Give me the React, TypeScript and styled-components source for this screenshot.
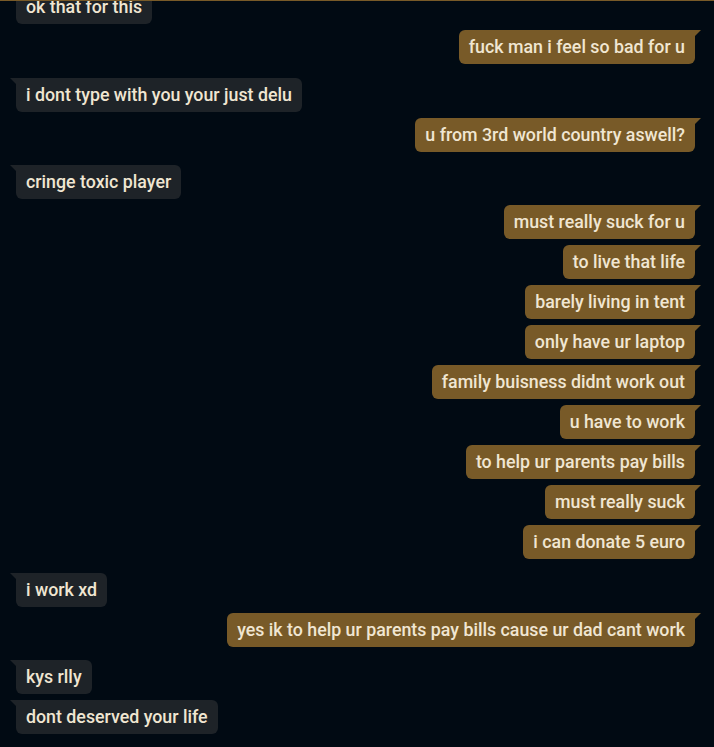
import React from 'react'
import styled, { createGlobalStyle } from 'styled-components'

const GlobalStyle = createGlobalStyle`
  html, body {
    margin: 0;
    padding: 0;
    background: #010a13;
  }
`

const Frame = styled.div`
  height: 747px;
  box-sizing: border-box;
  border-top: 1px solid #785a28;
  overflow: hidden;
  background: #010a13;
  font-family: Roboto, 'Noto Sans', sans-serif;
`

const List = styled.div`
  display: flex;
  flex-direction: column;
  margin-top: -11px;
  padding: 0 19px 0 16px;
`

const Row = styled.div<{ $mine: boolean; $spaced: boolean }>`
  display: flex;
  justify-content: ${(p) => (p.$mine ? 'flex-end' : 'flex-start')};
  margin-top: ${(p) => (p.$spaced ? '13.5px' : '6px')};
  &:first-child {
    margin-top: 0;
  }
`

const Bubble = styled.div<{ $mine: boolean }>`
  position: relative;
  padding: 7px 10px;
  line-height: 20px;
  font-size: 17.8px;
  font-weight: 500;
  color: #f0e6d2;
  white-space: nowrap;
  background: ${(p) => (p.$mine ? '#785a28' : '#1e2328')};
  border-radius: ${(p) => (p.$mine ? '6px 0 6px 6px' : '0 6px 6px 6px')};

  &::before {
    content: '';
    position: absolute;
    top: 0;
    width: 0;
    height: 0;
    border-top: 6px solid ${(p) => (p.$mine ? '#785a28' : '#1e2328')};
    ${(p) =>
      p.$mine
        ? 'right: -6px; border-right: 6px solid transparent;'
        : 'left: -6px; border-left: 6px solid transparent;'}
  }
`

type Msg = { text: string; mine: boolean }

const messages: Msg[] = [
  { text: 'ok that for this', mine: false },
  { text: 'fuck man i feel so bad for u', mine: true },
  { text: 'i dont type with you your just delu', mine: false },
  { text: 'u from 3rd world country aswell?', mine: true },
  { text: 'cringe toxic player', mine: false },
  { text: 'must really suck for u', mine: true },
  { text: 'to live that life', mine: true },
  { text: 'barely living in tent', mine: true },
  { text: 'only have ur laptop', mine: true },
  { text: 'family buisness didnt work out', mine: true },
  { text: 'u have to work', mine: true },
  { text: 'to help ur parents pay bills', mine: true },
  { text: 'must really suck', mine: true },
  { text: 'i can donate 5 euro', mine: true },
  { text: 'i work xd', mine: false },
  { text: 'yes ik to help ur parents pay bills cause ur dad cant work', mine: true },
  { text: 'kys rlly', mine: false },
  { text: 'dont deserved your life', mine: false },
]

const App = (): JSX.Element => {
  return (
    <Frame>
      <GlobalStyle />
      <List>
        {messages.map((m, i) => {
          const prev = messages[i - 1]
          const spaced = !!prev && !m.mine && prev.mine
          return (
            <Row key={i} $mine={m.mine} $spaced={spaced}>
              <Bubble $mine={m.mine}>{m.text}</Bubble>
            </Row>
          )
        })}
      </List>
    </Frame>
  )
}

export default App
